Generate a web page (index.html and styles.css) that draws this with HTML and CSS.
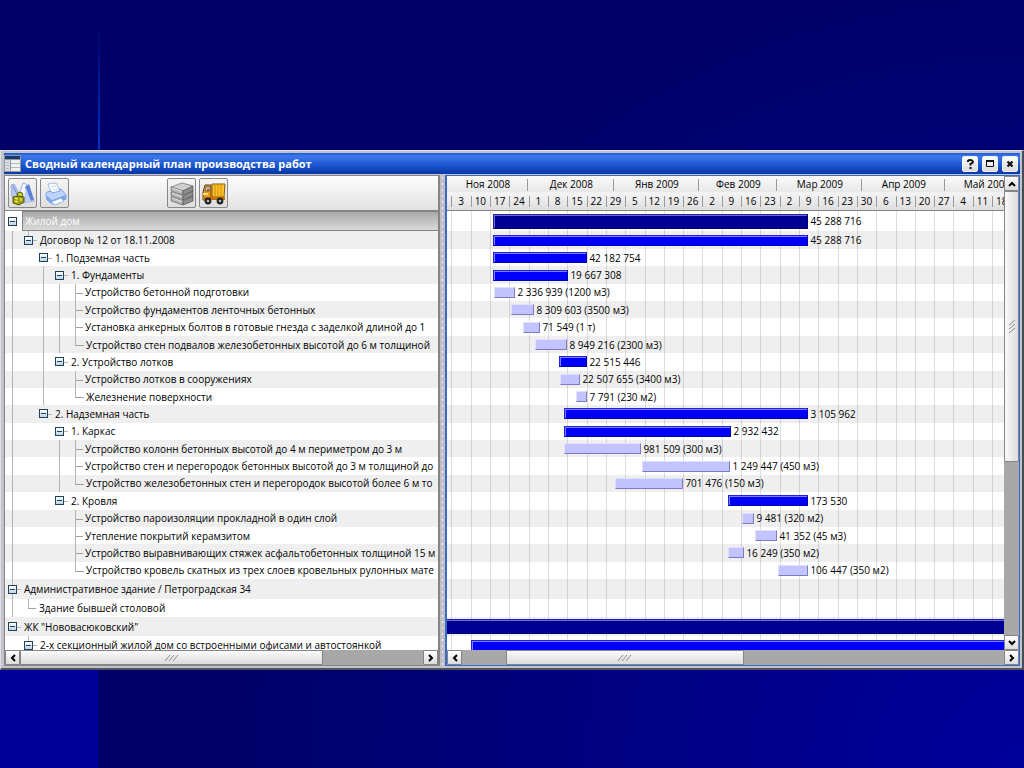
FILE: index.html
```html
<!DOCTYPE html>
<html lang="ru">
<head>
<meta charset="utf-8">
<title>Сводный календарный план производства работ</title>
<link rel="stylesheet" href="styles.css">
</head>
<body>
<main class="window">
  <header class="titlebar">
    <svg class="app-icon" width="17" height="17" viewBox="0 0 17 17" aria-hidden="true">
      <rect width="17" height="17" fill="#8f959c"/><rect x="1" y="1" width="15" height="3" fill="#173a6e"/>
      <rect x="1" y="5" width="5" height="11" fill="#d9dce0"/><rect x="7" y="5" width="9" height="11" fill="#f0f0ee"/>
      <path d="M2 7.500h3M2 10.500h3M2 13.500h3M7 8.500h9M7 12.500h9" stroke="#b4b9be"/>
    </svg>
    <h1>Сводный календарный план производства работ</h1>
    <div class="controls">
      <button type="button" aria-label="Справка"><svg width="9" height="10" viewBox="0 0 9 10"><path d="M2 3V1.800Q2.500 1 4.500 1T7 2.800Q7 4 4.500 5V6.500M4.500 8v2" fill="none" stroke="#111" stroke-width="2"/></svg></button>
      <button type="button" aria-label="Развернуть"><svg width="8" height="7" viewBox="0 0 8 7"><path d="M.5 1.500h7v5h-7z" fill="none" stroke="#111"/><path d="M0 1h8" stroke="#111" stroke-width="2"/></svg></button>
      <button type="button" aria-label="Закрыть"><svg width="8" height="8" viewBox="0 0 8 8"><path d="M1.500 1.500l5 5M6.500 1.500l-5 5" stroke="#111" stroke-width="2.200"/></svg></button>
    </div>
  </header>

  <div class="panes">
    <section class="pane tree-pane">
      <div class="toolbar">
        <button type="button" aria-label="Отчёты"><svg width="26" height="27" viewBox="0 0 26 27">
          <path d="M1 5l3-1 5 9-3 7-4-3z" fill="#b9c8f2" stroke="#7b8fcb" stroke-width=".6"/>
          <path d="M7 20L13 3l3 1 8 17-12 2z" fill="#f2f7ff" stroke="#8093cf" stroke-width=".7"/>
          <path d="M19 4l5 16-4 1-5-14z" fill="#5c7fd8"/><path d="M16 8l5 13-8 1z" fill="#b9cdf6"/>
          <path d="M3 6l5 10" stroke="#6f86cb"/>
          <circle cx="10" cy="15" r="2.800" fill="#d3d62c" stroke="#51570e"/>
          <path d="M3 17l5-1 6 1v5l-5 3-6-2z" fill="#9ca014" stroke="#51570e"/>
          <path d="M5 18l3 1M5 21l3 1M11 18v3" stroke="#e9ea4e" stroke-width="1.400"/>
        </svg></button>
        <button type="button" aria-label="Печать"><svg width="26" height="27" viewBox="0 0 26 27">
          <path d="M6 4l8-1 5 9-9 3z" fill="#fbfdff" stroke="#8fb2e4" stroke-width=".8"/>
          <path d="M4 15q-1-2 1-3l4-1 1 2 8-2-1-2 3 1 4 5v4l-14 5-5-4z" fill="#bdd5fa" stroke="#6d94db" stroke-width=".8"/>
          <path d="M4 15l6 5 14-5v4l-14 5-5-4z" fill="#7ea5ee"/>
          <path d="M9 22l10-4 3 3-9 4z" fill="#fafdff" stroke="#7ba4e2" stroke-width=".8"/>
          <path d="M9 7l5-1M11 10l5-1" stroke="#c4d8f4"/>
        </svg></button>
        <button type="button" class="gap" aria-label="Материалы"><svg width="26" height="27" viewBox="0 0 26 27">
          <path d="M2 7l11-4 11 3-10 5z" fill="#cfcfcf" stroke="#777" stroke-width=".8"/>
          <path d="M2 7l12 4v4L2 11zM2 12l12 4v4L2 16zM2 17l12 4v4L2 21z" fill="#b4b4b4" stroke="#666" stroke-width=".7"/>
          <path d="M24 6l-10 5v4l10-4zM24 11l-10 5v4l10-4zM24 16l-10 5v4l10-4z" fill="#8d8d8d" stroke="#555" stroke-width=".7"/>
          <path d="M3 8l10 3.500M3 13l10 3.500M3 18l10 3.500" stroke="#e6e6e6"/>
        </svg></button>
        <button type="button" aria-label="Техника"><svg width="26" height="27" viewBox="0 0 26 27">
          <path d="M2 12l2-7h6v15H2z" fill="#ef9a13" stroke="#5c3d08"/><path d="M4 11l1-4h4v4z" fill="#bfe7ee" stroke="#48615e" stroke-width=".7"/>
          <path d="M5 11l2-3 2 3z" fill="#d2431f"/>
          <path d="M11 4h13l-1 13H11z" fill="#ffc329" stroke="#8a5b07"/><path d="M14 5v11M17 5v11M20 5v11" stroke="#d28a10"/>
          <path d="M2 17h22v3H2z" fill="#c5740c"/><path d="M2 14h5" stroke="#ffe087" stroke-width="2"/>
          <circle cx="7" cy="21" r="3.400" fill="#222"/><circle cx="19" cy="21" r="3.400" fill="#222"/>
          <circle cx="7" cy="21" r="1.300" fill="#bbb"/><circle cx="19" cy="21" r="1.300" fill="#bbb"/>
        </svg></button>
      </div>
      <div class="viewport">
        <div class="guides" aria-hidden="true"><i class="k0 r2-23"></i><i class="k1 r2"></i><i class="k2 r4-11"></i><i class="k3 r5-8"></i><i class="k4 r5-7"></i><i class="k4 r10"></i><i class="k3 r14-16"></i><i class="k4 r14-15"></i><i class="k4 r18-20"></i><i class="k1 r25"></i></div>
        <div class="rows tree">
          <div class="d0 selected"><button type="button" class="toggle" aria-label="Свернуть"></button><span>Жилой дом</span></div>
          <div class="d1"><button type="button" class="toggle" aria-label="Свернуть"></button><span>Договор № 12 от 18.11.2008</span></div>
          <div class="d2"><button type="button" class="toggle" aria-label="Свернуть"></button><span>1. Подземная часть</span></div>
          <div class="d3"><button type="button" class="toggle" aria-label="Свернуть"></button><span>1. Фундаменты</span></div>
          <div class="d4 leaf"><span>Устройство бетонной подготовки</span></div>
          <div class="d4 leaf"><span>Устройство фундаментов ленточных бетонных</span></div>
          <div class="d4 leaf"><span>Установка анкерных болтов в готовые гнезда с заделкой длиной до 1</span></div>
          <div class="d4 leaf last"><span>Устройство стен подвалов железобетонных высотой до 6 м толщиной</span></div>
          <div class="d3"><button type="button" class="toggle" aria-label="Свернуть"></button><span>2. Устройство лотков</span></div>
          <div class="d4 leaf"><span>Устройство лотков в сооружениях</span></div>
          <div class="d4 leaf last"><span>Железнение поверхности</span></div>
          <div class="d2"><button type="button" class="toggle" aria-label="Свернуть"></button><span>2. Надземная часть</span></div>
          <div class="d3"><button type="button" class="toggle" aria-label="Свернуть"></button><span>1. Каркас</span></div>
          <div class="d4 leaf"><span>Устройство колонн бетонных высотой до 4 м периметром до 3 м</span></div>
          <div class="d4 leaf"><span>Устройство стен и перегородок бетонных высотой до 3 м толщиной до</span></div>
          <div class="d4 leaf last"><span>Устройство железобетонных стен и перегородок высотой более 6 м то</span></div>
          <div class="d3"><button type="button" class="toggle" aria-label="Свернуть"></button><span>2. Кровля</span></div>
          <div class="d4 leaf"><span>Устройство пароизоляции прокладной в один слой</span></div>
          <div class="d4 leaf"><span>Утепление покрытий керамзитом</span></div>
          <div class="d4 leaf"><span>Устройство выравнивающих стяжек асфальтобетонных толщиной 15 м</span></div>
          <div class="d4 leaf last"><span>Устройство кровель скатных из трех слоев кровельных рулонных мате</span></div>
          <div class="d0"><button type="button" class="toggle" aria-label="Свернуть"></button><span>Административное здание / Петроградская 34</span></div>
          <div class="d1 leaf last"><span>Здание бывшей столовой</span></div>
          <div class="d0"><button type="button" class="toggle" aria-label="Свернуть"></button><span>ЖК "Нововасюковский"</span></div>
          <div class="d1"><button type="button" class="toggle" aria-label="Свернуть"></button><span>2-х секционный жилой дом со встроенными офисами и автостоянкой</span></div>
        </div>
      </div>
      <div class="hscroll">
        <button type="button" aria-label="Влево"><svg width="6" height="8" viewBox="0 0 6 8"><path d="M5 1L2 4l3 3" fill="none" stroke="#000" stroke-width="2"/></svg></button>
        <div class="track"><div class="thumb" style="width:75%"><svg width="15" height="8" viewBox="0 0 15 8"><path d="M1 7l5-6M5 7l5-6M9 7l5-6" stroke="#8a8a8a"/></svg></div></div>
        <button type="button" aria-label="Вправо"><svg width="6" height="8" viewBox="0 0 6 8"><path d="M1 1l3 3-3 3" fill="none" stroke="#000" stroke-width="2"/></svg></button>
      </div>
    </section>

    <div class="splitter"></div>

    <section class="pane chart-pane">
      <div class="chart-main">
        <div class="timeline">
          <div class="scale">
            <div class="months"><span style="width:81px">Ноя 2008</span><span style="width:86px">Дек 2008</span><span style="width:85px">Янв 2009</span><span style="width:78px">Фев 2009</span><span style="width:85px">Мар 2009</span><span style="width:83px">Апр 2009</span><span style="width:83px">Май 2009</span></div>
            <div class="weeks"><span>3</span><span>10</span><span>17</span><span>24</span><span>1</span><span>8</span><span>15</span><span>22</span><span>29</span><span>5</span><span>12</span><span>19</span><span>26</span><span>2</span><span>9</span><span>16</span><span>23</span><span>2</span><span>9</span><span>16</span><span>23</span><span>30</span><span>6</span><span>13</span><span>20</span><span>27</span><span>4</span><span>11</span><span>18</span></div>
          </div>
          <div class="viewport">
            <div class="weeks lines" aria-hidden="true"><i></i><i></i><i></i><i></i><i></i><i></i><i></i><i></i><i></i><i></i><i></i><i></i><i></i><i></i><i></i><i></i><i></i><i></i><i></i><i></i><i></i><i></i><i></i><i></i><i></i><i></i><i></i><i></i><i></i></div>
            <div class="rows chart">
              <div><b class="bar project" style="margin-left:46px;width:315px"></b><span>45 288 716</span></div>
              <div><b class="bar" style="margin-left:46px;width:315px"></b><span>45 288 716</span></div>
              <div><b class="bar" style="margin-left:46px;width:94px"></b><span>42 182 754</span></div>
              <div><b class="bar" style="margin-left:46px;width:75px"></b><span>19 667 308</span></div>
              <div><b class="bar task" style="margin-left:47px;width:21px"></b><span>2 336 939 (1200 м3)</span></div>
              <div><b class="bar task" style="margin-left:64px;width:23px"></b><span>8 309 603 (3500 м3)</span></div>
              <div><b class="bar task" style="margin-left:76px;width:17px"></b><span>71 549 (1 т)</span></div>
              <div><b class="bar task" style="margin-left:88px;width:32px"></b><span>8 949 216 (2300 м3)</span></div>
              <div><b class="bar" style="margin-left:112px;width:28px"></b><span>22 515 446</span></div>
              <div><b class="bar task" style="margin-left:113px;width:20px"></b><span>22 507 655 (3400 м3)</span></div>
              <div><b class="bar task" style="margin-left:129px;width:11px"></b><span>7 791 (230 м2)</span></div>
              <div><b class="bar" style="margin-left:117px;width:244px"></b><span>3 105 962</span></div>
              <div><b class="bar" style="margin-left:117px;width:167px"></b><span>2 932 432</span></div>
              <div><b class="bar task" style="margin-left:117px;width:77px"></b><span>981 509 (300 м3)</span></div>
              <div><b class="bar task" style="margin-left:195px;width:88px"></b><span>1 249 447 (450 м3)</span></div>
              <div><b class="bar task" style="margin-left:168px;width:68px"></b><span>701 476 (150 м3)</span></div>
              <div><b class="bar" style="margin-left:281px;width:80px"></b><span>173 530</span></div>
              <div><b class="bar task" style="margin-left:295px;width:12px"></b><span>9 481 (320 м2)</span></div>
              <div><b class="bar task" style="margin-left:308px;width:22px"></b><span>41 352 (45 м3)</span></div>
              <div><b class="bar task" style="margin-left:281px;width:16px"></b><span>16 249 (350 м2)</span></div>
              <div><b class="bar task" style="margin-left:331px;width:30px"></b><span>106 447 (350 м2)</span></div>
              <div></div>
              <div></div>
              <div><b class="bar project" style="margin-left:-2px;width:640px"></b></div>
              <div><b class="bar" style="margin-left:24px;width:600px"></b></div>
            </div>
          </div>
        </div>
        <div class="vscroll">
          <button type="button" aria-label="Вверх"><svg width="8" height="6" viewBox="0 0 8 6"><path d="M1 5l3-3 3 3" fill="none" stroke="#000" stroke-width="2"/></svg></button>
          <div class="track"><div class="thumb" style="height:61%"><svg width="8" height="15" viewBox="0 0 8 15"><path d="M1 6l6-5M1 10l6-5M1 14l6-5" stroke="#8a8a8a"/></svg></div></div>
          <button type="button" aria-label="Вниз"><svg width="8" height="6" viewBox="0 0 8 6"><path d="M1 1l3 3 3-3" fill="none" stroke="#000" stroke-width="2"/></svg></button>
        </div>
      </div>
      <div class="hscroll">
        <button type="button" aria-label="Влево"><svg width="6" height="8" viewBox="0 0 6 8"><path d="M5 1L2 4l3 3" fill="none" stroke="#000" stroke-width="2"/></svg></button>
        <div class="track"><div class="thumb" style="margin-left:8%;width:44%"><svg width="15" height="8" viewBox="0 0 15 8"><path d="M1 7l5-6M5 7l5-6M9 7l5-6" stroke="#8a8a8a"/></svg></div></div>
        <button type="button" aria-label="Вправо"><svg width="6" height="8" viewBox="0 0 6 8"><path d="M1 1l3 3-3 3" fill="none" stroke="#000" stroke-width="2"/></svg></button>
      </div>
    </section>
  </div>
</main>
</body>
</html>
```
FILE: styles.css
```css
* { box-sizing: border-box; }

body {
  margin: 0;
  min-height: 100vh;
  padding-top: 150px;
  font: 10px/16px "Open Sans", "Noto Sans", sans-serif;
  color: #000;
  background:
    linear-gradient(to bottom, transparent 20px, #0033cc 150px) 98px 0 / 2px 150px no-repeat,
    linear-gradient(to right, #000099, #000099) 0 100% / 98px 50% no-repeat,
    radial-gradient(circle at 100% 100%, #00009c, #000066 65%);
}

button { margin: 0; padding: 0; border: 0; font: inherit; flex: none; }
button svg { display: block; margin: auto; }

.window {
  padding: 2px 2px 2px 3px;
  background: #c3c3cb;
  border: 1px solid #dfe0ea;
  border-right: 2px solid #484c58;
  border-bottom: 2px solid #50545c;
}

.titlebar {
  display: flex;
  align-items: center;
  gap: 4px;
  height: 21px;
  background: linear-gradient(#1b5bd4, #3d78ea 15%, #1b55cf 60%, #0637a5);
}
.titlebar h1 {
  flex: 1;
  margin: 0;
  font: bold 11px/18px "Open Sans", sans-serif;
  color: #fff;
}
.controls { display: flex; gap: 4px; padding-right: 2px; }
.controls button {
  width: 16px;
  height: 16px;
  background: linear-gradient(#fff, #dadada);
  border: 1px solid #f0f0f0;
  border-radius: 2px;
}

.panes { display: flex; margin-top: 1px; }
.pane { display: flex; flex-direction: column; min-width: 0; border: 1px solid #858585; }
.tree-pane { flex: 436; border-width: 1px 2px 1px 1px; }
.splitter {
  flex: 0 0 5px;
  background: radial-gradient(circle, #f2f2f2 1px, #bfc0c6 1px) 0 0 / 5px 6px;
}
.chart-pane { flex: 575; border: 2px solid #376bc5; border-width: 1px 1px 1px 2px; }

.toolbar {
  display: flex;
  align-items: center;
  gap: 3px;
  height: 35px;
  padding: 0 3px;
  background: linear-gradient(#fdfdfd, #e2e2e2);
  border-bottom: 1px solid #858585;
}
.toolbar button {
  width: 29px;
  height: 30px;
  background: linear-gradient(#f5f5f5, #dedede);
  border: 1px solid #888;
  border-radius: 2px;
}
.toolbar .gap { margin-left: 95px; }

.viewport { position: relative; height: 439px; overflow: hidden; background: #fff; }

/* Both panes and the tree guides share one set of row heights. */
.rows, .guides {
  display: grid;
  height: 443px;
  grid-template-rows: 20px 18px repeat(19, 1fr) 20px 18px 19px 18px;
}
.rows > div { display: flex; align-items: center; min-width: 0; white-space: nowrap; overflow: hidden; }
.rows > div:nth-child(even) { background: #efefef; }

.guides { position: absolute; inset: 0; z-index: 1; pointer-events: none; grid-template-columns: 1fr; }
.guides i { grid-column: 1; width: 1px; background: #b4b4b4; }
.k0 { margin-left: 7px; }
.k1 { margin-left: 23px; }
.k2 { margin-left: 38px; }
.k3 { margin-left: 54px; }
.k4 { margin-left: 70px; }
.r2-23 { grid-row: 2 / 24; }
.r2 { grid-row: 2 / 3; height: 5px; }
.r4-11 { grid-row: 4 / 12; }
.r5-8 { grid-row: 5 / 9; }
.r5-7 { grid-row: 5 / 8; }
.r10 { grid-row: 10 / 11; }
.r14-16 { grid-row: 14 / 17; }
.r14-15 { grid-row: 14 / 16; }
.r18-20 { grid-row: 18 / 21; }
.r25 { grid-row: 25 / 26; height: 5px; }

.tree .d0 { padding-left: 3px; }
.tree .d1 { padding-left: 19px; }
.tree .d2 { padding-left: 34px; }
.tree .d3 { padding-left: 50px; }
.tree .d4 { padding-left: 70px; }
.tree .d1.leaf { padding-left: 23px; }

.toggle {
  position: relative;
  z-index: 2;
  width: 9px;
  height: 9px;
  border: 1px solid #1f4258;
  background: linear-gradient(#1f4258, #1f4258) center / 5px 1px no-repeat, linear-gradient(#fff, #bcd4e4);
}
.toggle + span { position: relative; padding-left: 7px; }
.toggle + span::before { content: ""; position: absolute; left: 0; top: 50%; width: 4px; height: 1px; background: #b4b4b4; }

.leaf::before {
  content: "";
  flex: none;
  align-self: flex-start;
  width: 7px;
  height: 9px;
  margin-right: 3px;
  border-bottom: 1px solid #a0a0a0;
}
.leaf.last::before { border-left: 1px solid #b4b4b4; }
.d4.leaf::before { width: 8px; margin-right: 2px; }

.selected { color: #fff; }
.selected .toggle + span {
  flex: 1;
  margin-left: 5px;
  padding-left: 2px;
  line-height: 18px;
  background: linear-gradient(#a9a9a9, #dadada);
  border: 1px solid #858585;
  border-width: 1px 0 1px 1px;
}
.selected .toggle + span::before { display: none; }

.chart-main { display: flex; }
.timeline { flex: 1; min-width: 0; }
.scale {
  height: 35px;
  overflow: hidden;
  background: linear-gradient(#fafafa, #e8e8e8 45%, #f4f4f4 50%, #dedede);
  border-bottom: 1px solid #858585;
}
.months { display: flex; line-height: 17px; }
.months span {
  flex: none;
  text-align: center;
  background: linear-gradient(#9a9a9a, #9a9a9a) 100% 50% / 1px 12px no-repeat;
}
.weeks {
  display: grid;
  grid-template-columns: repeat(29, 1fr);
  width: 564px;
  padding-left: 4px;
}
.weeks span {
  text-align: center;
  background: linear-gradient(#9a9a9a, #9a9a9a) 0 50% / 1px 11px no-repeat;
}
.lines { position: absolute; inset: 0 auto 0 0; z-index: 1; pointer-events: none; }
.lines i { border-left: 1px solid rgba(0, 0, 0, .13); }

.bar {
  position: relative;
  z-index: 2;
  flex: none;
  height: 11px;
  background: #0000fa;
  border: 1px solid;
  border-color: #2020e8 #0000b4 #0000b4 #2020e8;
  box-shadow: inset 1px 1px #8080ff;
}
.bar.project {
  height: 15px;
  background: #000092;
  border-color: #2020a8 #000070 #000070 #2020a8;
  box-shadow: inset 1px 1px #6c6cd0;
}
.bar.task {
  background: #c3c3ff;
  border-color: #e0e0ff #7c7cc0 #7c7cc0 #e0e0ff;
  box-shadow: none;
}
.chart span { position: relative; z-index: 2; padding-left: 2px; }

.hscroll, .vscroll { display: flex; background: #a8a8a8; }
.hscroll { height: 15px; }
.vscroll { flex: 0 0 15px; flex-direction: column; }
.hscroll button, .vscroll button {
  width: 15px;
  height: 15px;
  background: linear-gradient(#fff, #dcdcdc);
  border: 1px solid #858585;
  border-radius: 1px;
}
.track { flex: 1; min-width: 0; }
.thumb {
  display: flex;
  align-items: center;
  justify-content: center;
  height: 100%;
  border: 1px solid #858585;
  border-radius: 1px;
  background: linear-gradient(#fafafa, #dcdcdc);
}
.vscroll .thumb { background: linear-gradient(to right, #fafafa, #dcdcdc); }
```
